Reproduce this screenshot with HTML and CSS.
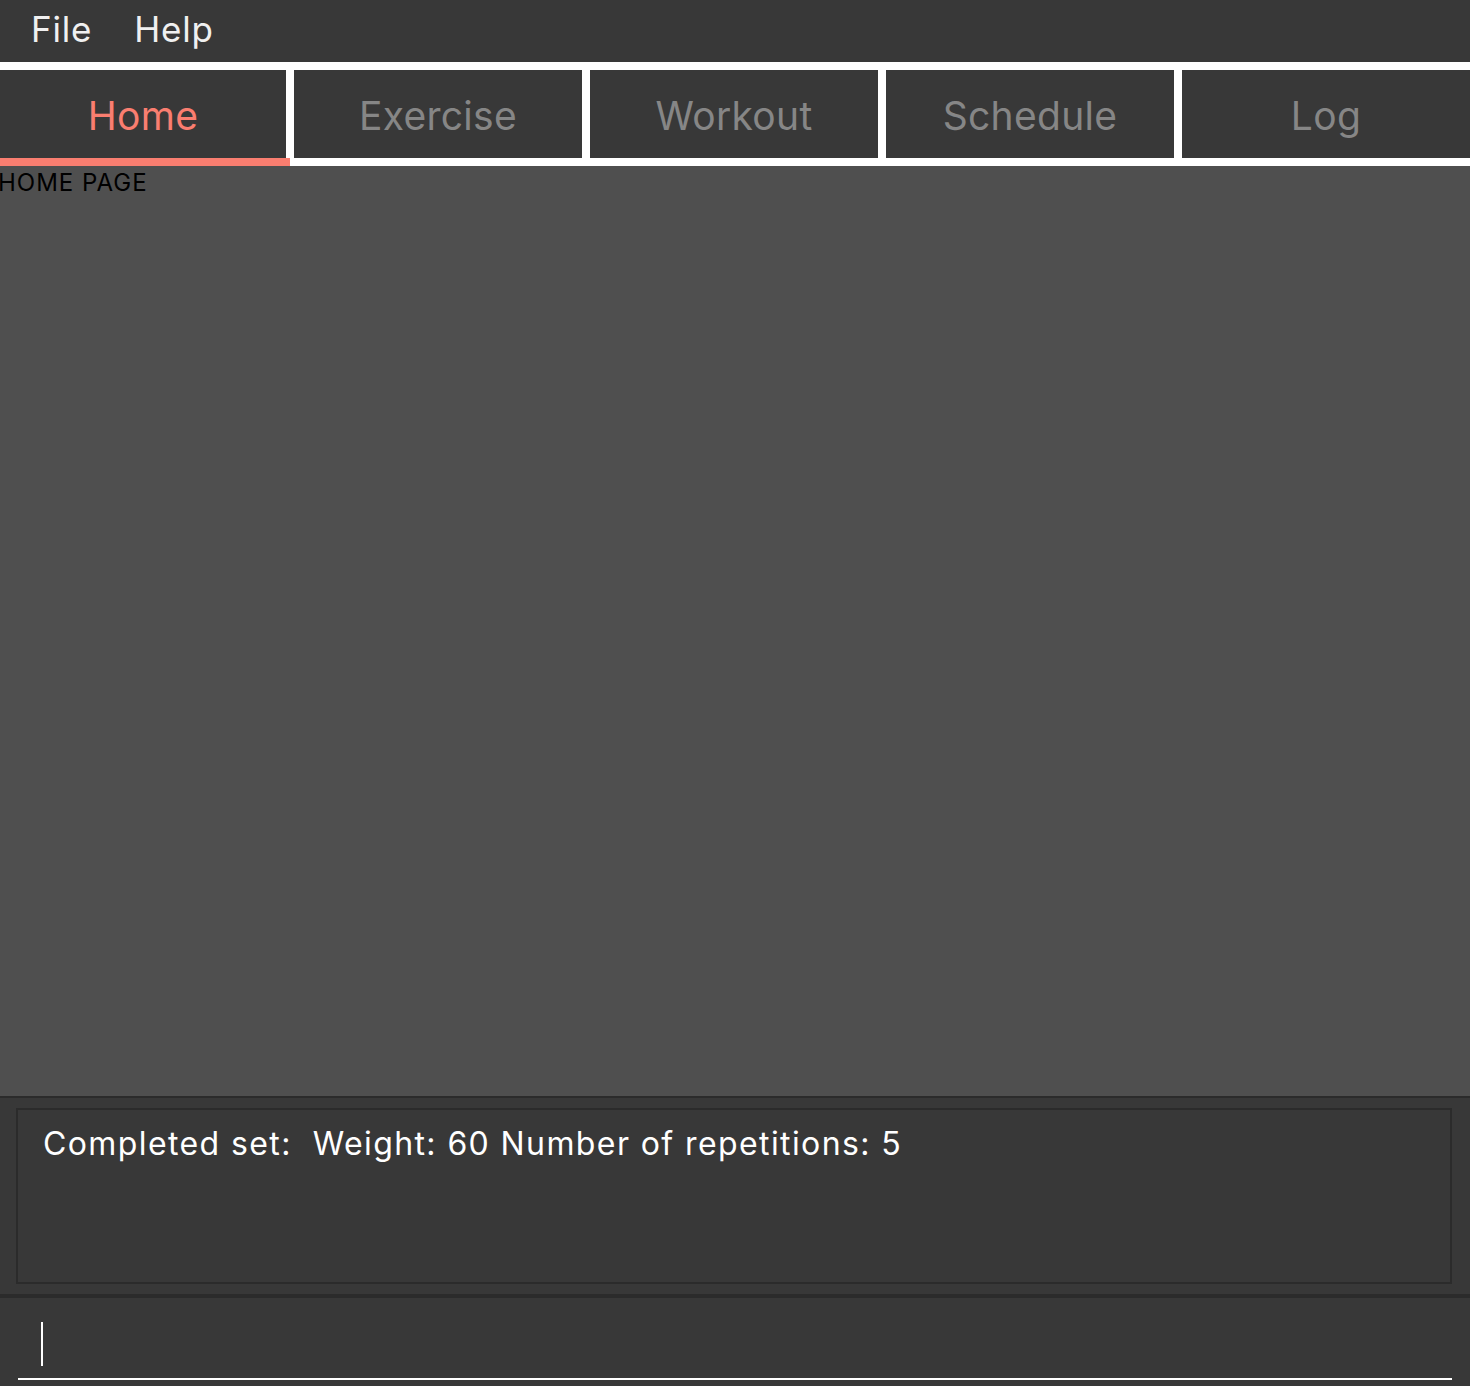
FILE: index.html
```html
<!DOCTYPE html>
<html>
<head>
<meta charset="utf-8">
<link rel="stylesheet" href="styles.css">
</head>
<body>
<div class="app">
  <div class="menubar">
    <span class="menu-item">File</span>
    <span class="menu-item">Help</span>
  </div>
  <div class="tabbar">
    <div class="tab tab-first active">Home</div>
    <div class="tab">Exercise</div>
    <div class="tab">Workout</div>
    <div class="tab">Schedule</div>
    <div class="tab">Log</div>
  </div>
  <div class="content">
    <div class="page-title">HOME PAGE</div>
  </div>
  <div class="result-area">
    <div class="result-box">Completed set:&nbsp; Weight: 60 Number of repetitions: 5</div>
  </div>
  <div class="command-area">
    <div class="command-box"><span class="caret"></span></div>
  </div>
</div>
</body>
</html>
```
FILE: styles.css
```css
* { box-sizing: border-box; }
html, body { margin: 0; padding: 0; }
body {
  width: 1470px;
  height: 1386px;
  overflow: hidden;
  background: #383838;
  font-family: Inter, "Noto Sans", sans-serif;
}
.app {
  display: flex;
  flex-direction: column;
  height: 1386px;
}
.menubar {
  height: 62px;
  flex: none;
  background: #383838;
  display: flex;
  align-items: center;
  padding-left: 31px;
  gap: 42px;
}
.menu-item {
  color: #f0f0f0;
  font-size: 35px;
  letter-spacing: 0.8px;
  line-height: 1;
  margin-top: -4px;
}
.tabbar {
  flex: none;
  background: #ffffff;
  padding: 8px 0;
  display: flex;
  gap: 8px;
  height: 104px;
}
.tab {
  width: 288px;
  height: 88px;
  background: #383838;
  color: #868686;
  font-size: 39px;
  letter-spacing: 0.3px;
  display: flex;
  align-items: center;
  justify-content: center;
  padding-top: 3px;
  position: relative;
}
.tab-first { width: 286px; }
.tab.active { color: #fa7e70; }
.tab.active::after {
  content: "";
  position: absolute;
  left: 0;
  right: -4px;
  bottom: -8px;
  height: 8px;
  background: #fa7e70;
}
.content {
  flex: 1;
  background: #4f4f4f;
}
.page-title {
  color: #000000;
  font-size: 24px;
  letter-spacing: 1px;
  margin-left: -2px;
  margin-top: 3px;
  line-height: 28px;
}
.result-area {
  flex: none;
  border-top: 2px solid #2b2b2b;
  padding: 10px 18px 10px 16px;
  height: 198px;
  background: #383838;
}
.result-box {
  height: 176px;
  border: 2px solid #2b2b2b;
  color: #ffffff;
  font-size: 32px;
  letter-spacing: 1.4px;
  padding: 15px 0 0 25px;
  line-height: 38px;
}
.command-area {
  flex: none;
  height: 92px;
  border-top: 4px solid #2b2b2b;
  padding: 0 18px 6px 18px;
  background: #383838;
}
.command-box {
  height: 82px;
  border-bottom: 2px solid #ffffff;
  padding: 24px 0 0 23px;
}
.caret {
  display: block;
  width: 2px;
  height: 44px;
  background: #ffffff;
}
```
